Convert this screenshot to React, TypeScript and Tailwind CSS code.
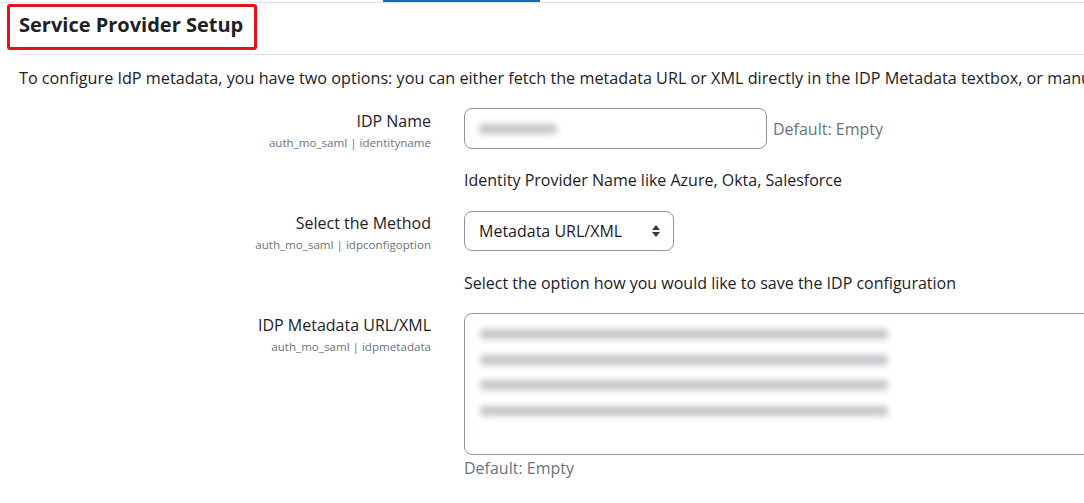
import React from "react";

const Blur = ({ w, h = 10 }: { w: number; h?: number }) => (
  <div className="bg-[#c3c5c8] rounded-sm blur-[3px]" style={{ width: w, height: h }} />
);

function Label({ title, sub }: { title: string; sub: string }) {
  return (
    <div className="w-[431px] shrink-0 text-right">
      <div className="text-[16px] leading-[24px] text-[#1d2125] mt-[-1px]">{title}</div>
      <div className="text-[11.6px] leading-[18px] text-[#6a737b] mt-[1px]">{sub}</div>
    </div>
  );
}

export default function App() {
  return (
    <div className="w-[1084px] h-[503px] overflow-hidden bg-white font-['Open_Sans',sans-serif] text-[#1d2125]">
      <div className="relative h-[3px] border-b border-[#dee2e6]">
        <div className="absolute left-[383px] top-0 w-[157px] h-[2px] bg-[#0f6cbf]" />
      </div>
      <div className="pl-[7px] pt-[1px]">
        <div className="w-[250px] h-[46px] border-[3px] border-[#e8101a] rounded-[3px] flex items-center pl-[9px] pb-[4px]">
          <h3 className="text-[20px] font-bold text-[#1d2125] leading-none">Service Provider Setup</h3>
        </div>
      </div>
      <div className="ml-[19px] mt-[4px] border-t border-[#dee2e6]" />
      <div className="ml-[19px] mt-[11px] text-[16.2px] leading-[24px] whitespace-nowrap">
        To configure IdP metadata, you have two options: you can either fetch the metadata URL or XML directly in the IDP Metadata textbox, or manually enter the metadata.
      </div>

      <div className="flex mt-[19px]">
        <div className="pt-[1px]"><Label title="IDP Name" sub="auth_mo_saml | identityname" /></div>
        <div className="ml-[33px]">
          <div className="flex items-center mt-[-1px]">
            <div className="w-[303px] h-[41px] border border-[#8f959e] rounded-[8px] flex items-center pl-[14px]">
              <Blur w={78} h={10} />
            </div>
            <span className="ml-[6px] text-[16px] text-[#6a737b]">Default: Empty</span>
          </div>
          <div className="mt-[19px] text-[16px] leading-[24px]">Identity Provider Name like Azure, Okta, Salesforce</div>
        </div>
      </div>

      <div className="flex mt-[19px]">
        <div className="pt-[1px]"><Label title="Select the Method" sub="auth_mo_saml | idpconfigoption" /></div>
        <div className="ml-[33px]">
          <div className="w-[210px] h-[40px] border border-[#8f959e] rounded-[8px] flex items-center pl-[14px] pr-[12px] justify-between">
            <span className="text-[16px]">Metadata URL/XML</span>
            <svg width="10" height="14" viewBox="0 0 10 14">
              <path d="M5 1 L9 6 H1 Z" fill="#343a40" />
              <path d="M5 13 L9 8 H1 Z" fill="#343a40" />
            </svg>
          </div>
          <div className="mt-[20px] text-[16px] leading-[24px]">Select the option how you would like to save the IDP configuration</div>
        </div>
      </div>

      <div className="flex mt-[18px]">
        <div className="pt-[1px]"><Label title="IDP Metadata URL/XML" sub="auth_mo_saml | idpmetadata" /></div>
        <div className="ml-[33px] flex-1">
          <div className="w-[640px] h-[142px] border border-[#8f959e] rounded-[8px] pl-[15px] pt-[15px] flex flex-col gap-[15.5px]">
            <Blur w={408} />
            <Blur w={408} />
            <Blur w={408} />
            <Blur w={408} />
          </div>
          <div className="mt-[1px] text-[16px] leading-[24px] text-[#6a737b]">Default: Empty</div>
        </div>
      </div>
    </div>
  );
}
